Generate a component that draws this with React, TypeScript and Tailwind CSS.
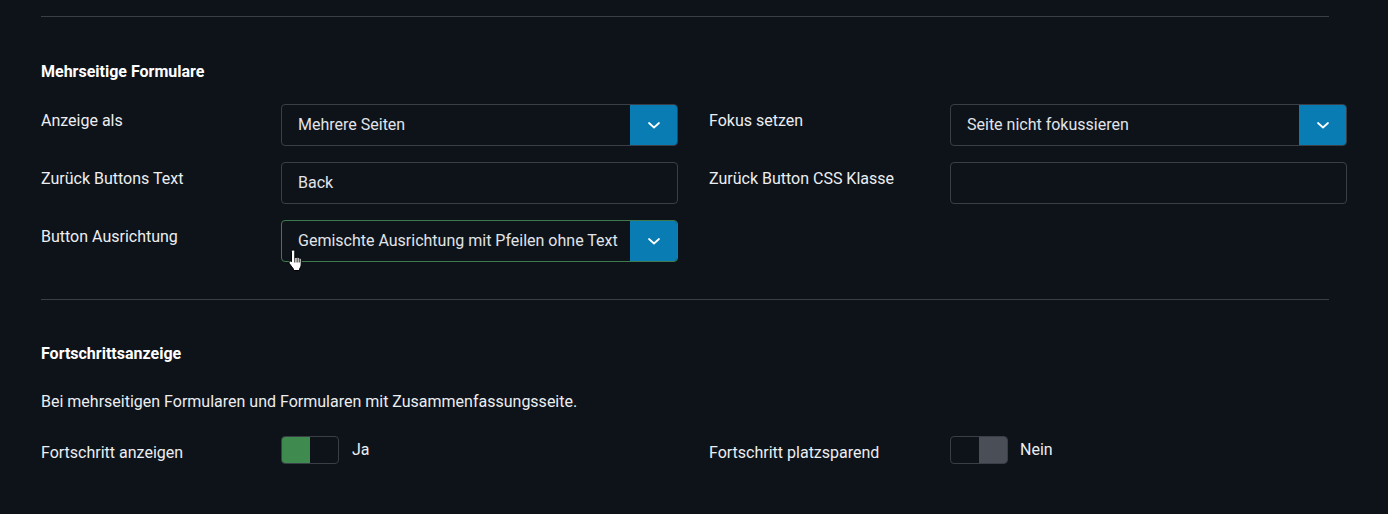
import React from 'react';

function Chevron() {
  return (
    <svg width="14" height="14" viewBox="0 0 14 14" fill="none">
      <path d="M2 5l5 4.5L12 5" stroke="white" strokeWidth="1.7" strokeLinecap="round" strokeLinejoin="round" />
    </svg>
  );
}

function Select({ value, focused }: { value: string; focused?: boolean }) {
  return (
    <div
      className={`flex h-[42px] w-[397px] items-stretch overflow-hidden rounded-[4px] border ${
        focused ? 'border-[#3f7a4c]' : 'border-[#3a3f47]'
      }`}
    >
      <div className="flex min-w-0 flex-1 items-center overflow-hidden whitespace-nowrap pl-[16px] text-[16px] text-[#e1e4e8]">
        {value}
      </div>
      <div className="flex w-[47px] shrink-0 items-center justify-center bg-[#0a7cb4]">
        <Chevron />
      </div>
    </div>
  );
}

function TextInput({ value }: { value?: string }) {
  return (
    <div className="flex h-[42px] w-[397px] items-center rounded-[4px] border border-[#3a3f47] px-[16px] text-[16px] text-[#e1e4e8]">
      {value}
    </div>
  );
}

function Toggle({ on }: { on: boolean }) {
  return (
    <div className="flex h-[28px] w-[58px] overflow-hidden rounded-[4px] border border-[#3a3f47]">
      <div className={`flex-1 ${on ? 'bg-[#3f8a4f]' : 'bg-transparent'}`} />
      <div className={`flex-1 ${on ? 'bg-transparent' : 'bg-[#4a4f57]'}`} />
    </div>
  );
}

function Field({ label, wide, children }: { label: string; wide?: boolean; children: React.ReactNode }) {
  return (
    <div className="flex items-start">
      <div className={`${wide ? 'w-[241px]' : 'w-[240px]'} pt-[5px] text-[16px] leading-[24px] text-[#eceef1]`}>
        {label}
      </div>
      {children}
    </div>
  );
}

function HandCursor() {
  return (
    <svg width="17" height="23" viewBox="0 0 17 23" className="pointer-events-none absolute left-[287px] top-[249px]">
      <path
        d="M6 1C7 1 7.8 1.6 7.8 2.5V9C8.2 8.2 9.8 8.2 10.1 9C10.5 8.3 12 8.4 12.2 9.4C12.7 8.9 14.2 9.1 14.2 10.3V15C14.2 17 13.4 18.5 12.6 20V21.5H6.4V20L2.4 14.6C1.7 13.6 2.1 12.5 2.9 12.2C3.6 11.9 4.2 12.3 4.5 12.8V2.5C4.5 1.6 5.1 1 6 1Z"
        fill="white"
        stroke="black"
        strokeWidth="1"
        strokeLinejoin="round"
      />
      <path d="M7.8 9V13.5M10.1 9.2V13.5M12.2 9.6V13.5" stroke="black" strokeWidth="0.9" />
    </svg>
  );
}

export default function App() {
  return (
    <div
      className="relative min-h-[514px] w-full bg-[#0e131a] pl-[41px] pt-[16px]"
      style={{ fontFamily: 'Roboto, "Noto Sans", sans-serif' }}
    >
      <div className="h-px w-[1288px] bg-[#3a3f47]" />

      <h3 className="mt-[45px] text-[16px] font-bold leading-[20px] text-white">Mehrseitige Formulare</h3>

      <div className="mt-[22px] flex flex-col gap-[16px]">
        <div className="flex gap-[31px]">
          <Field label="Anzeige als">
            <Select value="Mehrere Seiten" />
          </Field>
          <Field label="Fokus setzen" wide>
            <Select value="Seite nicht fokussieren" />
          </Field>
        </div>
        <div className="flex gap-[31px]">
          <Field label="Zurück Buttons Text">
            <TextInput value="Back" />
          </Field>
          <Field label="Zurück Button CSS Klasse" wide>
            <TextInput />
          </Field>
        </div>
        <div className="flex gap-[31px]">
          <Field label="Button Ausrichtung">
            <Select value="Gemischte Ausrichtung mit Pfeilen ohne Text" focused />
          </Field>
        </div>
      </div>

      <div className="mt-[37px] h-px w-[1288px] bg-[#3a3f47]" />

      <h3 className="mt-[44px] text-[16px] font-bold leading-[20px] text-white">Fortschrittsanzeige</h3>

      <p className="mt-[26px] text-[16px] leading-[24px] text-[#eceef1]">
        Bei mehrseitigen Formularen und Formularen mit Zusammenfassungsseite.
      </p>

      <div className="mt-[22px] flex gap-[31px]">
        <div className="flex w-[637px] items-start">
          <div className="w-[240px] pt-[5px] text-[16px] leading-[24px] text-[#eceef1]">Fortschritt anzeigen</div>
          <Toggle on />
          <span className="ml-[13px] pt-[2px] text-[16px] leading-[24px] text-[#eceef1]">Ja</span>
        </div>
        <div className="flex items-start">
          <div className="w-[241px] pt-[5px] text-[16px] leading-[24px] text-[#eceef1]">Fortschritt platzsparend</div>
          <Toggle on={false} />
          <span className="ml-[12px] pt-[2px] text-[16px] leading-[24px] text-[#eceef1]">Nein</span>
        </div>
      </div>

      <HandCursor />
    </div>
  );
}
